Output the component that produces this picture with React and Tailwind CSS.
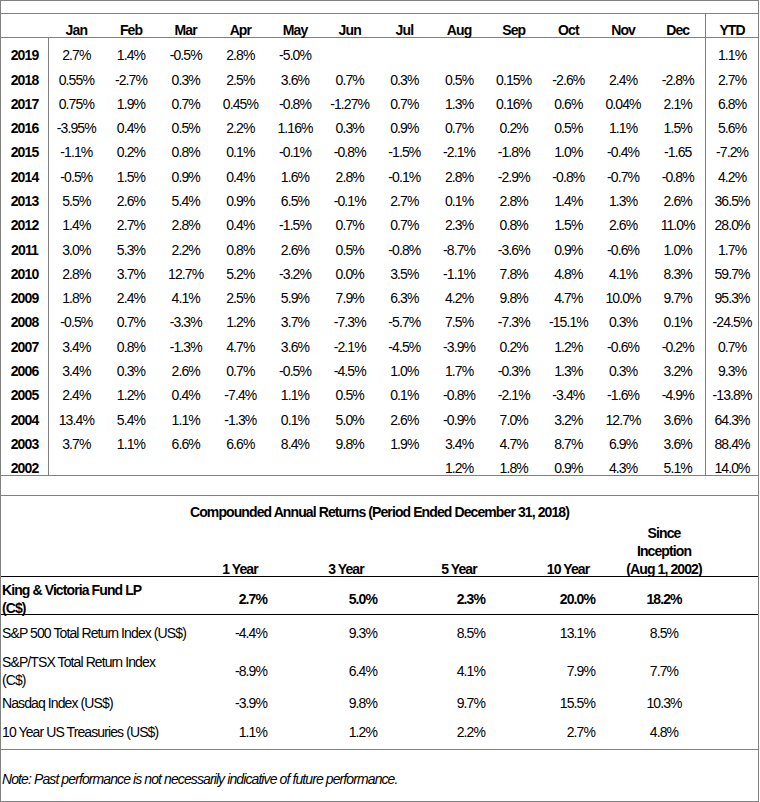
const months = ['Jan', 'Feb', 'Mar', 'Apr', 'May', 'Jun', 'Jul', 'Aug', 'Sep', 'Oct', 'Nov', 'Dec']

const monthly = [
  ['2019', ['2.7%', '1.4%', '-0.5%', '2.8%', '-5.0%', '', '', '', '', '', '', ''], '1.1%'],
  ['2018', ['0.55%', '-2.7%', '0.3%', '2.5%', '3.6%', '0.7%', '0.3%', '0.5%', '0.15%', '-2.6%', '2.4%', '-2.8%'], '2.7%'],
  ['2017', ['0.75%', '1.9%', '0.7%', '0.45%', '-0.8%', '-1.27%', '0.7%', '1.3%', '0.16%', '0.6%', '0.04%', '2.1%'], '6.8%'],
  ['2016', ['-3.95%', '0.4%', '0.5%', '2.2%', '1.16%', '0.3%', '0.9%', '0.7%', '0.2%', '0.5%', '1.1%', '1.5%'], '5.6%'],
  ['2015', ['-1.1%', '0.2%', '0.8%', '0.1%', '-0.1%', '-0.8%', '-1.5%', '-2.1%', '-1.8%', '1.0%', '-0.4%', '-1.65'], '-7.2%'],
  ['2014', ['-0.5%', '1.5%', '0.9%', '0.4%', '1.6%', '2.8%', '-0.1%', '2.8%', '-2.9%', '-0.8%', '-0.7%', '-0.8%'], '4.2%'],
  ['2013', ['5.5%', '2.6%', '5.4%', '0.9%', '6.5%', '-0.1%', '2.7%', '0.1%', '2.8%', '1.4%', '1.3%', '2.6%'], '36.5%'],
  ['2012', ['1.4%', '2.7%', '2.8%', '0.4%', '-1.5%', '0.7%', '0.7%', '2.3%', '0.8%', '1.5%', '2.6%', '11.0%'], '28.0%'],
  ['2011', ['3.0%', '5.3%', '2.2%', '0.8%', '2.6%', '0.5%', '-0.8%', '-8.7%', '-3.6%', '0.9%', '-0.6%', '1.0%'], '1.7%'],
  ['2010', ['2.8%', '3.7%', '12.7%', '5.2%', '-3.2%', '0.0%', '3.5%', '-1.1%', '7.8%', '4.8%', '4.1%', '8.3%'], '59.7%'],
  ['2009', ['1.8%', '2.4%', '4.1%', '2.5%', '5.9%', '7.9%', '6.3%', '4.2%', '9.8%', '4.7%', '10.0%', '9.7%'], '95.3%'],
  ['2008', ['-0.5%', '0.7%', '-3.3%', '1.2%', '3.7%', '-7.3%', '-5.7%', '7.5%', '-7.3%', '-15.1%', '0.3%', '0.1%'], '-24.5%'],
  ['2007', ['3.4%', '0.8%', '-1.3%', '4.7%', '3.6%', '-2.1%', '-4.5%', '-3.9%', '0.2%', '1.2%', '-0.6%', '-0.2%'], '0.7%'],
  ['2006', ['3.4%', '0.3%', '2.6%', '0.7%', '-0.5%', '-4.5%', '1.0%', '1.7%', '-0.3%', '1.3%', '0.3%', '3.2%'], '9.3%'],
  ['2005', ['2.4%', '1.2%', '0.4%', '-7.4%', '1.1%', '0.5%', '0.1%', '-0.8%', '-2.1%', '-3.4%', '-1.6%', '-4.9%'], '-13.8%'],
  ['2004', ['13.4%', '5.4%', '1.1%', '-1.3%', '0.1%', '5.0%', '2.6%', '-0.9%', '7.0%', '3.2%', '12.7%', '3.6%'], '64.3%'],
  ['2003', ['3.7%', '1.1%', '6.6%', '6.6%', '8.4%', '9.8%', '1.9%', '3.4%', '4.7%', '8.7%', '6.9%', '3.6%'], '88.4%'],
  ['2002', ['', '', '', '', '', '', '', '1.2%', '1.8%', '0.9%', '4.3%', '5.1%'], '14.0%'],
]

const compounded = [
  { label: ['King & Victoria Fund LP', '(C$)'], bold: true, vals: ['2.7%', '5.0%', '2.3%', '20.0%', '18.2%'], h: 'h-[38px] pt-[4px] border-b border-black' },
  { label: ['S&P 500 Total Return Index (US$)'], vals: ['-4.4%', '9.3%', '8.5%', '13.1%', '8.5%'], h: 'h-[36px]' },
  { label: ['S&P/TSX Total Return Index', '(C$)'], vals: ['-8.9%', '6.4%', '4.1%', '7.9%', '7.7%'], h: 'h-[40px]' },
  { label: ['Nasdaq Index (US$)'], vals: ['-3.9%', '9.8%', '9.7%', '15.5%', '10.3%'], h: 'h-[24px]' },
  { label: ['10 Year US Treasuries (US$)'], vals: ['1.1%', '1.2%', '2.2%', '2.7%', '4.8%'], h: 'h-[34px]' },
]

const cols = 'grid grid-cols-[204px_70px_142px_84px_134px_58px_1fr]'
const valPad = ['pr-[8px]', 'pr-[40px]', 'pr-[16px]', 'pr-[40px]']

export default function App() {
  return (
    <div className="w-[760px] h-[802px] bg-white">
      <div
        className="w-[759px] h-[802px] border border-[#808080] text-black text-[14px] tracking-[-0.9px] flex flex-col"
        style={{ fontFamily: '"Liberation Sans", Arial, sans-serif' }}
      >
        {/* top spacer */}
        <div className="h-[13px] border-b border-[#808080]" />

        {/* month header */}
        <div className="flex h-[24px] border-b border-[#808080] font-bold leading-[14px]">
          <div className="w-[48px]" />
          {months.map(m => (
            <div key={m} className="flex-1 flex items-end justify-center">{m}</div>
          ))}
          <div className="w-[53px] border-l border-[#808080] flex items-end justify-center">YTD</div>
        </div>

        {/* monthly rows */}
        <div className="h-[438px] border-b border-[#808080] flex flex-col leading-[14px]">
          {monthly.map(([year, vals, ytd]) => (
            <div key={year} className="flex-1 flex">
              <div className="w-[48px] border-r border-[#808080] font-bold flex items-end justify-center">{year}</div>
              {vals.map((v, i) => (
                <div key={i} className="flex-1 flex items-end justify-center">{v}</div>
              ))}
              <div className="w-[53px] border-l border-[#808080] flex items-end justify-center">{ytd}</div>
            </div>
          ))}
        </div>

        {/* gap band */}
        <div className="h-[20px] border-b border-[#808080]" />

        {/* compounded returns */}
        <div className="pt-[7px] h-[25px] text-center font-bold leading-[18px]">
          Compounded Annual Returns (Period Ended December 31, 2018)
        </div>
        <div className={`${cols} h-[56px] border-b border-black font-bold leading-[18px]`}>
          <div />
          <div className="flex items-end justify-center"><span className="-mb-[2px]">1 Year</span></div>
          <div className="flex items-end justify-center"><span className="-mb-[2px]">3 Year</span></div>
          <div className="flex items-end justify-center"><span className="-mb-[2px]">5 Year</span></div>
          <div className="flex items-end justify-center"><span className="-mb-[2px]">10 Year</span></div>
          <div className="flex items-end justify-center whitespace-nowrap">
            <div className="flex flex-col items-center -mb-[2px]">
              <span>Since</span>
              <span>Inception</span>
              <span>(Aug 1, 2002)</span>
            </div>
          </div>
          <div />
        </div>

        {compounded.map((r, idx) => (
          <div key={idx} className={`${cols} ${r.h} leading-[18px] ${r.bold ? 'font-bold' : ''}`}>
            <div className="flex flex-col justify-center pl-[1px] whitespace-nowrap">
              {r.label.map(l => <span key={l}>{l}</span>)}
            </div>
            {r.vals.slice(0, 4).map((v, i) => (
              <div key={i} className={`flex items-center justify-end ${valPad[i]}`}>{v}</div>
            ))}
            <div className="flex items-center justify-center">{r.vals[4]}</div>
            <div />
          </div>
        ))}

        <div className="border-t border-[#808080] flex-1 flex items-center pt-[6px] pl-[1px] italic leading-[18px]">
          Note: Past performance is not necessarily indicative of future performance.
        </div>
      </div>
    </div>
  )
}
